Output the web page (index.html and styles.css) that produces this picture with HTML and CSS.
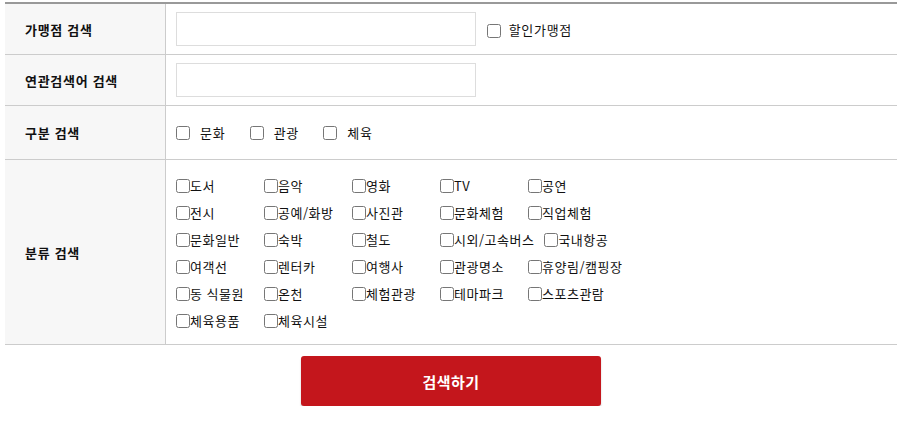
FILE: index.html
```html
<!DOCTYPE html>
<html lang="ko">
<head>
    <meta charset="UTF-8" />
    <title>가맹점 검색</title>
    <link rel="stylesheet" href="styles.css">
</head>
<body>
    <div class="search-box">
        <table class="search-table">
            <tr class="row-store">
                <th>가맹점 검색</th>
                <td>
                    <input type="text" class="text-input">
                    <label class="chk-inline"><input type="checkbox"> 할인가맹점</label>
                </td>
            </tr>
            <tr class="row-keyword">
                <th>연관검색어 검색</th>
                <td><input type="text" class="text-input"></td>
            </tr>
            <tr class="row-type">
                <th>구분 검색</th>
                <td>
                    <label class="chk-type"><input type="checkbox">문화</label>
                    <label class="chk-type"><input type="checkbox">관광</label>
                    <label class="chk-type"><input type="checkbox">체육</label>
                </td>
            </tr>
            <tr class="row-cate">
                <th>분류 검색</th>
                <td>
                    <div class="cate-list">
                        <label><input type="checkbox">도서</label>
                        <label><input type="checkbox">음악</label>
                        <label><input type="checkbox">영화</label>
                        <label><input type="checkbox">TV</label>
                        <label><input type="checkbox">공연</label>
                        <label><input type="checkbox">전시</label>
                        <label><input type="checkbox">공예/화방</label>
                        <label><input type="checkbox">사진관</label>
                        <label><input type="checkbox">문화체험</label>
                        <label><input type="checkbox">직업체험</label>
                        <label><input type="checkbox">문화일반</label>
                        <label><input type="checkbox">숙박</label>
                        <label><input type="checkbox">철도</label>
                        <label><input type="checkbox">시외/고속버스</label>
                        <label><input type="checkbox">국내항공</label>
                        <label><input type="checkbox">여객선</label>
                        <label><input type="checkbox">렌터카</label>
                        <label><input type="checkbox">여행사</label>
                        <label><input type="checkbox">관광명소</label>
                        <label><input type="checkbox">휴양림/캠핑장</label>
                        <label><input type="checkbox">동 식물원</label>
                        <label><input type="checkbox">온천</label>
                        <label><input type="checkbox">체험관광</label>
                        <label><input type="checkbox">테마파크</label>
                        <label><input type="checkbox">스포츠관람</label>
                        <label><input type="checkbox">체육용품</label>
                        <label><input type="checkbox">체육시설</label>
                    </div>
                </td>
            </tr>
        </table>
        <div class="btn-area">
            <button class="btn-search">검색하기</button>
        </div>
    </div>
</body>
</html>
```

FILE: styles.css
```css
body {
    margin: 0;
    font-family: "Noto Sans CJK KR", "Noto Sans", sans-serif;
    font-size: 13px;
    letter-spacing: 0.7px;
    color: #111;
    background-color: #fff;
}

.search-box {
    padding: 2px 21px 0 5px;
}

.search-table {
    width: 100%;
    border-collapse: collapse;
    border-top: 2px solid #999;
}

.search-table th {
    width: 140px;
    padding: 0 0 0 20px;
    text-align: left;
    font-weight: bold;
    background-color: #f7f7f7;
    border-right: 1px solid #ccc;
    border-bottom: 1px solid #ccc;
}

.search-table td {
    padding: 0 0 0 10px;
    border-bottom: 1px solid #ccc;
}

.row-store th, .row-store td { height: 50px; }
.row-keyword th, .row-keyword td { height: 50px; }
.row-type th, .row-type td { height: 53px; }

.text-input {
    width: 300px;
    height: 34px;
    box-sizing: border-box;
    border: 1px solid #ddd;
    margin: 0;
    vertical-align: middle;
}

input[type="checkbox"] {
    width: 14px;
    height: 14px;
    margin: 0;
    vertical-align: middle;
}

.chk-inline {
    margin-left: 7px;
    vertical-align: middle;
}

.chk-inline input {
    margin-right: 3px;
}

.chk-type {
    margin-right: 20px;
}

.chk-type input {
    margin-right: 10px;
    position: relative;
    top: -1px;
}

.cate-list {
    display: flex;
    flex-wrap: wrap;
    max-width: 470px;
    padding: 12px 0 10px;
}

.cate-list label {
    min-width: 78px;
    margin-right: 10px;
    line-height: 27px;
    white-space: nowrap;
    letter-spacing: 0.5px;
}

.cate-list input {
    position: relative;
    top: -1px;
}

.btn-area {
    text-align: center;
    padding-top: 11px;
}

.btn-search {
    width: 300px;
    height: 50px;
    border: none;
    border-radius: 3px;
    background-color: #c4161c;
    color: #fff;
    font-family: inherit;
    font-size: 15px;
    font-weight: bold;
    letter-spacing: 0.5px;
    box-shadow: 0 2px 2px #ccc;
    cursor: pointer;
}
```
